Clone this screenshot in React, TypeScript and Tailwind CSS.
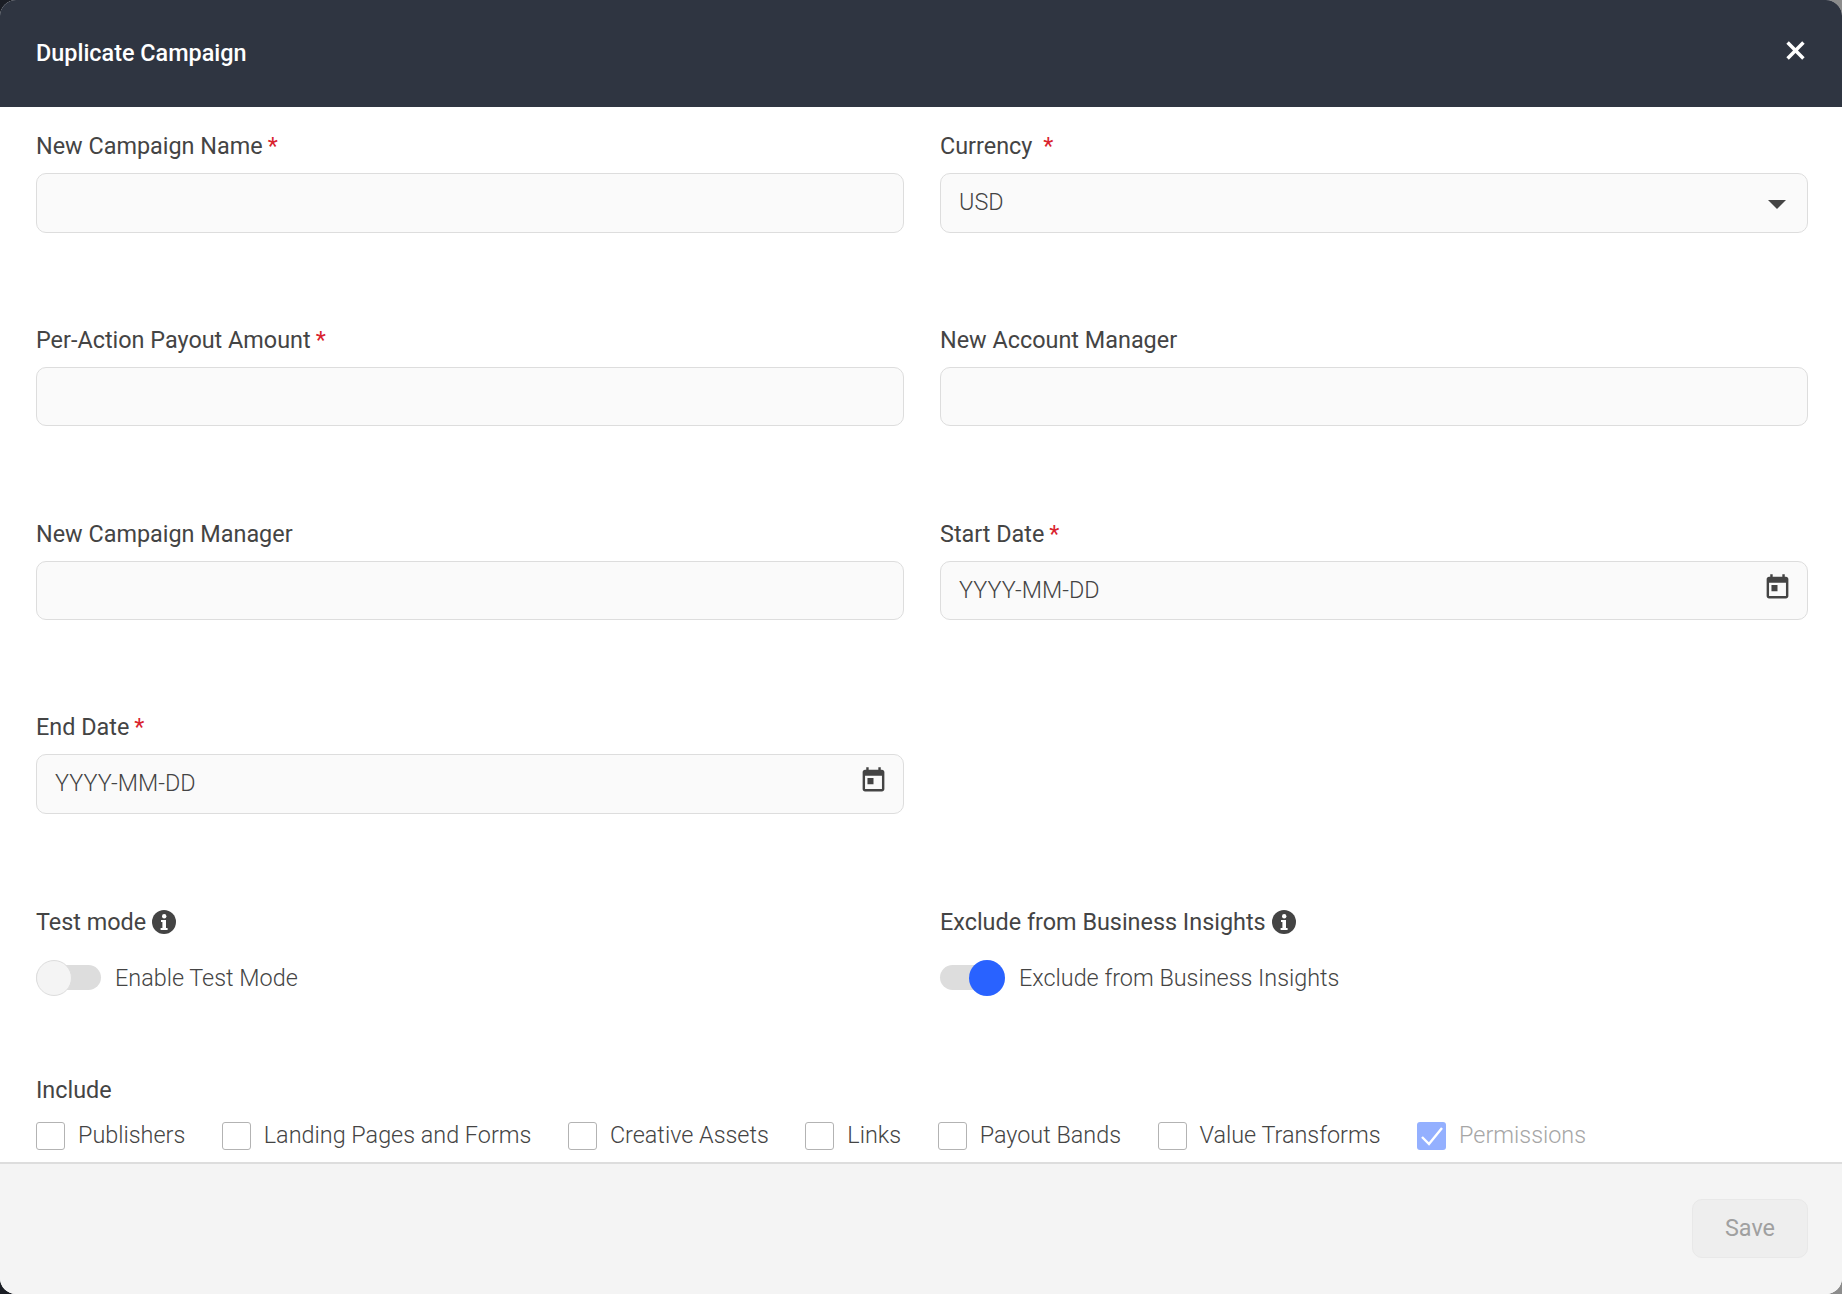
import { ReactNode } from 'react';

function Req() {
  return <span className="ml-[5px] text-[#d9232e]">*</span>;
}

function CalendarIcon() {
  return (
    <svg viewBox="0 0 24 24" className="absolute right-[15px] top-[11px] h-[29px] w-[29px] fill-[#444444]">
      <path d="M19 3h-1V1h-2v2H8V1H6v2H5c-1.11 0-1.99.9-1.99 2L3 19c0 1.1.89 2 2 2h14c1.1 0 2-.9 2-2V5c0-1.1-.9-2-2-2zm0 16H5V8h14v11zM7 10h5v5H7z" />
    </svg>
  );
}

function InfoIcon() {
  return (
    <svg viewBox="0 0 24 24" className="ml-[6px] h-[24px] w-[24px]">
      <circle cx="12" cy="12" r="12" fill="#444444" />
      <circle cx="12.2" cy="6.2" r="2.2" fill="#ffffff" />
      <path d="M9 10h5v8h1.6v2H8.6v-2h1.8v-6H9z" fill="#ffffff" />
    </svg>
  );
}

function Field({ label, children }: { label: ReactNode; children?: ReactNode }) {
  return (
    <div className="h-[193.8px]">
      <div className="h-[66px] pt-[22px] text-[23.4px] leading-[34px] text-[#444444]">{label}</div>
      <div className="relative h-[59.5px] rounded-[10px] border border-[#dddddd] bg-[#fafafa] px-[18px] text-[23.4px] font-light leading-[56px] text-[#444444]">
        {children}
      </div>
    </div>
  );
}

function Toggle({ on, label }: { on?: boolean; label: string }) {
  return (
    <div className="mt-[21px] flex items-center">
      <div className="relative h-[36px] w-[65px]">
        <div className="absolute left-0 top-[5px] h-[25px] w-[65px] rounded-full bg-[#dddddd]" />
        {on ? (
          <div className="absolute right-0 top-0 h-[36px] w-[36px] rounded-full bg-[#2962ff]" />
        ) : (
          <div className="absolute left-0 top-0 h-[36px] w-[36px] rounded-full border border-[#dddddd] bg-[#f4f4f4]" />
        )}
      </div>
      <span className="ml-[14px] text-[23.4px] font-light text-[#444444]">{label}</span>
    </div>
  );
}

function Check({ label, checked }: { label: string; checked?: boolean }) {
  return (
    <div className="flex items-center">
      {checked ? (
        <div className="flex h-[28px] w-[29px] items-center justify-center rounded-[3px] bg-[#94b0ff]">
          <svg viewBox="0 0 24 24" className="h-[24px] w-[24px] fill-none stroke-white stroke-[2.4]">
            <path d="M2 13l7 7L22 4" />
          </svg>
        </div>
      ) : (
        <div className="h-[28px] w-[29px] rounded-[3px] border border-[#b3b3b3] bg-white" />
      )}
      <span className={`ml-[13px] text-[23.4px] font-light ${checked ? 'text-[#a6a6a6]' : 'text-[#444444]'}`}>{label}</span>
    </div>
  );
}

export default function App() {
  return (
    <div className="h-[1294px] w-[1842px] overflow-hidden bg-[linear-gradient(90deg,#1a1d24,#8c8c8c)] font-['Roboto',sans-serif]">
      <div className="flex h-full flex-col overflow-hidden rounded-[16px] bg-white">
        <header className="flex h-[107px] items-start justify-between bg-[#2f3541] pl-[36px] pr-[37px] text-white">
          <h1 className="pt-[36px] text-[23.4px] font-medium leading-[34px]">Duplicate Campaign</h1>
          <svg viewBox="0 0 24 24" className="mt-[41px] h-[19px] w-[19px] stroke-white stroke-[4.4]">
            <path d="M2 2l20 20M22 2L2 22" />
          </svg>
        </header>

        <main className="flex-1 pl-[36px] pr-[34px]">
          <div className="grid grid-cols-2 gap-x-[36px]">
            <Field label={<>New Campaign Name<Req /></>} />
            <Field label={<>Currency <Req /></>}>
              USD
              <div className="absolute right-[21px] top-[26px] h-0 w-0 border-x-[9px] border-t-[9px] border-x-transparent border-t-[#444444]" />
            </Field>
            <Field label={<>Per-Action Payout Amount<Req /></>} />
            <Field label="New Account Manager" />
            <Field label="New Campaign Manager" />
            <Field label={<>Start Date<Req /></>}>
              YYYY-MM-DD
              <CalendarIcon />
            </Field>
            <Field label={<>End Date<Req /></>}>
              YYYY-MM-DD
              <CalendarIcon />
            </Field>
            <div />
          </div>

          <div className="mt-[23px] grid h-[168px] grid-cols-2 gap-x-[36px]">
            <div>
              <div className="flex h-[34px] items-center text-[23.4px] text-[#444444]">
                Test mode
                <InfoIcon />
              </div>
              <Toggle label="Enable Test Mode" />
            </div>
            <div>
              <div className="flex h-[34px] items-center text-[23.4px] text-[#444444]">
                Exclude from Business Insights
                <InfoIcon />
              </div>
              <Toggle on label="Exclude from Business Insights" />
            </div>
          </div>

          <div className="text-[23.4px] leading-[34px] text-[#444444]">Include</div>
          <div className="mt-[11px] flex gap-x-[36.5px]">
            <Check label="Publishers" />
            <Check label="Landing Pages and Forms" />
            <Check label="Creative Assets" />
            <Check label="Links" />
            <Check label="Payout Bands" />
            <Check label="Value Transforms" />
            <Check label="Permissions" checked />
          </div>
        </main>

        <footer className="flex h-[132px] items-start justify-end border-t-2 border-[#dddddd] bg-[#f4f4f4] pr-[34px] pt-[35px]">
          <button className="h-[59px] w-[116px] rounded-[10px] border border-[#e8e8e8] bg-[#eeeeee] pt-[1px] text-[23.4px] text-[#a0a0a0]">Save</button>
        </footer>
      </div>
    </div>
  );
}
